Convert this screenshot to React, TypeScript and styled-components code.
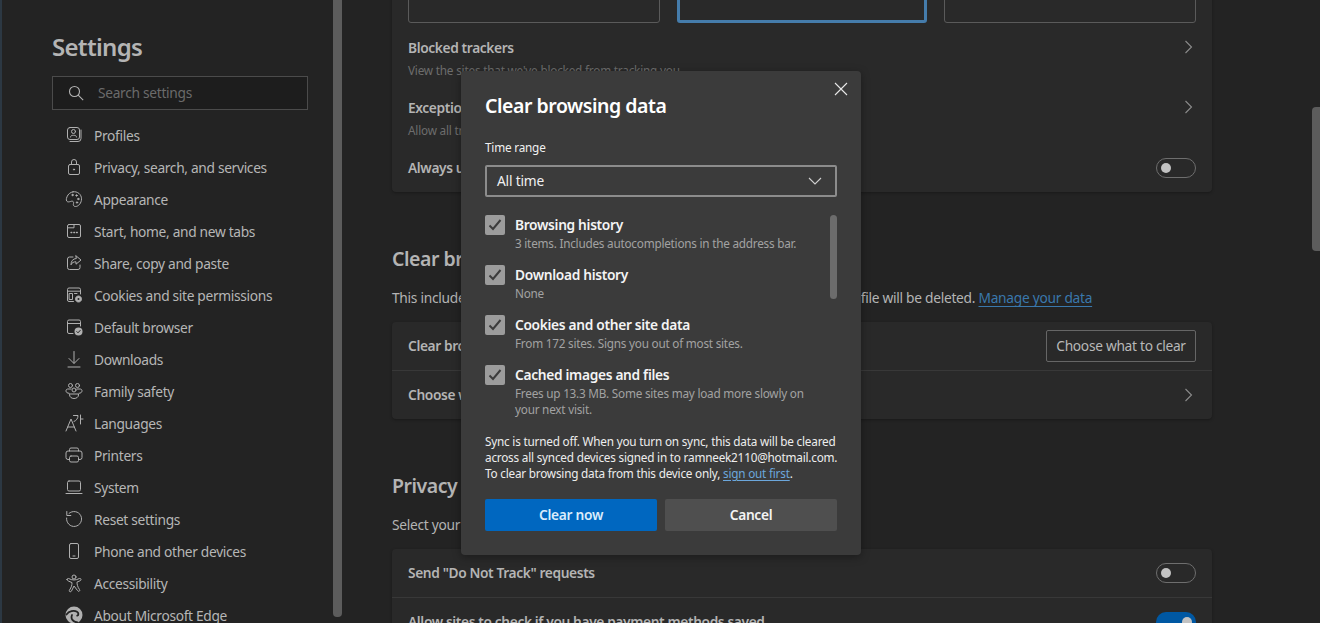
import { ReactNode } from 'react';
import styled, { createGlobalStyle } from 'styled-components';

const GlobalStyle = createGlobalStyle`
  html, body {
    margin: 0;
    height: 100%;
    overflow: hidden;
    background: #232323;
    font-family: 'Noto Sans', 'Open Sans', sans-serif;
    font-size: 14px;
  }
`;

const Page = styled.div`
  position: relative;
  display: flex;
  width: 1320px;
  height: 623px;
  overflow: hidden;
  border-left: 2px solid #2c3843;
  box-sizing: border-box;
  background: #232323;
`;

const Sidebar = styled.aside`
  width: 340px;
  flex: none;
  display: flex;
  height: 623px;
  overflow: hidden;
`;

const SideInner = styled.div`
  width: 256px;
  margin-left: 50px;
  padding-top: 30px;
`;

const SideTitle = styled.h1`
  margin: 0 0 12px;
  font-size: 24px;
  line-height: 34px;
  font-weight: 600;
  color: #b4b4b4;
  letter-spacing: -0.7px;
`;

const SearchBox = styled.div`
  height: 34px;
  box-sizing: border-box;
  border: 1px solid #4b4b4b;
  background: #1d1d1d;
  display: flex;
  align-items: center;
  padding: 0 0 1px 15px;
  gap: 14px;
  color: #6b6b6b;
  font-size: 13.75px;
  letter-spacing: -0.3px;
  svg { color: #b4b4b4; }
`;

const NavList = styled.nav`
  margin-top: 9px;
`;

const NavItem = styled.div`
  height: 32px;
  display: flex;
  align-items: center;
  color: #b6b6b6;
  font-size: 13.75px;
  letter-spacing: -0.32px;
  white-space: nowrap;
  padding-left: 12px;
  gap: 10px;
  svg { flex: none; }
`;

const SideScroll = styled.div`
  width: 9px;
  height: 617px;
  margin-left: 25px;
  background: #5c5c5c;
  border-radius: 0 0 4px 4px;
  flex: none;
`;

const Main = styled.main`
  flex: 1;
  height: 623px;
  overflow: hidden;
  padding-left: 50px;
`;

const Content = styled.div`
  width: 820px;
  margin-top: -77px;
`;

const Card = styled.section`
  background: #292929;
  border-radius: 4px;
  box-shadow: 0 1px 3px rgba(0, 0, 0, 0.3);
`;

const ThemeRow = styled.div`
  display: grid;
  grid-template-columns: 252px 250px 252px;
  column-gap: 17px;
  padding: 0 16px;
`;

const ThemeBox = styled.div<{ $active?: boolean }>`
  height: 100px;
  box-sizing: border-box;
  border-radius: 3px;
  border: ${(p) => (p.$active ? '3px solid #457cab' : '1px solid #5a5a5a')};
`;

const Row = styled.div<{ $h: number; $line?: boolean }>`
  height: ${(p) => p.$h}px;
  box-sizing: border-box;
  padding: 0 16px;
  display: flex;
  align-items: center;
  justify-content: space-between;
  border-top: ${(p) => (p.$line ? '1px solid #383838' : 'none')};
`;

const TallRow = styled(Row)`
  align-items: flex-start;
  padding-top: 15px;
  svg { margin-top: 1px; }
`;

const RowText = styled.div`
  display: flex;
  flex-direction: column;
  gap: 3px;
`;

const RowTitle = styled.div`
  font-size: 13.75px;
  line-height: 20px;
  font-weight: 600;
  color: #b4b4b4;
  letter-spacing: -0.38px;
  white-space: nowrap;
`;

const RowSub = styled.div`
  font-size: 11.75px;
  line-height: 18px;
  color: #6d6d6d;
  letter-spacing: -0.2px;
  white-space: nowrap;
`;

const Toggle = styled.div<{ $on?: boolean }>`
  width: 40px;
  height: 20px;
  flex: none;
  box-sizing: border-box;
  border-radius: 10px;
  border: ${(p) => (p.$on ? 'none' : '1px solid #6e6e6e')};
  background: ${(p) => (p.$on ? '#0058a3' : 'transparent')};
  display: flex;
  align-items: center;
  justify-content: ${(p) => (p.$on ? 'flex-end' : 'flex-start')};
  padding: 0 4px;
  &::after {
    content: '';
    width: 10px;
    height: 10px;
    border-radius: 50%;
    background: #c2c2c2;
  }
`;

const Heading = styled.h2<{ $top: number }>`
  margin: ${(p) => p.$top}px 0 0;
  font-size: 19.5px;
  line-height: 28px;
  font-weight: 600;
  color: #b4b4b4;
  letter-spacing: -0.46px;
  white-space: nowrap;
`;

const Intro = styled.p`
  margin: 15px 0 14px;
  font-size: 13.75px;
  line-height: 20px;
  color: #b4b4b4;
  letter-spacing: -0.28px;
  white-space: nowrap;
`;

const PageLink = styled.a`
  color: #3a78ac;
  text-decoration: underline;
  text-underline-offset: 3px;
`;

const OutlineButton = styled.div`
  width: 150px;
  height: 32px;
  box-sizing: border-box;
  border: 1px solid #666;
  border-radius: 2px;
  color: #b8b8b8;
  display: flex;
  align-items: center;
  justify-content: center;
  padding-bottom: 1px;
  font-size: 13.75px;
  letter-spacing: -0.3px;
`;

const Modal = styled.div`
  position: absolute;
  left: 459px;
  top: 71px;
  width: 400px;
  height: 484px;
  box-sizing: border-box;
  padding: 20px 24px 0;
  background: #3b3b3b;
  border-radius: 4px;
  box-shadow: 0 2px 8px rgba(0, 0, 0, 0.35);
  color: #fff;
`;

const CloseButton = styled.button`
  position: absolute;
  right: 13px;
  top: 11px;
  width: 14px;
  height: 14px;
  padding: 0;
  border: none;
  background: none;
  color: #e8e8e8;
  display: flex;
`;

const ModalTitle = styled.h3`
  margin: 0;
  font-size: 19.5px;
  line-height: 30px;
  font-weight: 600;
  letter-spacing: -0.46px;
  color: #fff;
`;

const FieldLabel = styled.div`
  margin-top: 17px;
  font-size: 11.75px;
  line-height: 18px;
  color: #f0f0f0;
  letter-spacing: -0.2px;
`;

const Select = styled.div`
  margin-top: 9px;
  height: 32px;
  box-sizing: border-box;
  border: 2px solid #8c8c8c;
  border-radius: 2px;
  padding: 0 13px 1px 10px;
  display: flex;
  align-items: center;
  justify-content: space-between;
  font-size: 13.75px;
  color: #f0f0f0;
  letter-spacing: -0.2px;
`;

const ListArea = styled.div`
  position: relative;
  margin-top: 18px;
  height: 202px;
  overflow: hidden;
`;

const CheckRow = styled.div`
  display: flex;
  gap: 10px;
  height: 50px;
`;

const CheckBox = styled.div`
  width: 20px;
  height: 20px;
  flex: none;
  background: #9c9c9c;
  border-radius: 2px;
  display: flex;
  align-items: center;
  justify-content: center;
  color: #3c3c3c;
`;

const CheckText = styled.div`
  width: 296px;
`;

const CheckTitle = styled.div`
  font-size: 13.75px;
  line-height: 20px;
  font-weight: 600;
  letter-spacing: -0.32px;
  color: #f4f4f4;
`;

const CheckSub = styled.div`
  font-size: 11.75px;
  line-height: 16px;
  color: #a2a2a2;
  letter-spacing: -0.23px;
`;

const ListThumb = styled.div`
  position: absolute;
  right: 0;
  top: 0;
  width: 7px;
  height: 84px;
  border-radius: 4px;
  background: #6c6c6c;
`;

const SyncNote = styled.p`
  margin: 16px 0 0;
  font-size: 11.75px;
  line-height: 16px;
  letter-spacing: -0.21px;
  color: #ededed;
  white-space: nowrap;
`;

const NoteLink = styled.a`
  color: #6ca7dc;
  text-decoration: underline;
  text-underline-offset: 2px;
`;

const Buttons = styled.div`
  display: grid;
  grid-template-columns: 172px 172px;
  justify-content: space-between;
  margin-top: 18px;
`;

const ActionButton = styled.button<{ $primary?: boolean }>`
  height: 32px;
  border: none;
  border-radius: 2px;
  padding: 0 0 2px;
  font-family: inherit;
  font-size: 13.75px;
  font-weight: 600;
  letter-spacing: -0.3px;
  background: ${(p) => (p.$primary ? '#0067c0' : '#4f4f4f')};
  color: ${(p) => (p.$primary ? '#d9ecfb' : '#f4f4f4')};
`;

const MainScroll = styled.div`
  position: absolute;
  right: 0;
  top: 107px;
  width: 8px;
  height: 144px;
  border-radius: 4px 0 0 4px;
  background: #5c5c5c;
`;

function Ico({ children }: { children: ReactNode }) {
  return (
    <svg
      width="20"
      height="20"
      viewBox="0 0 20 20"
      fill="none"
      stroke="#b0b0b0"
      strokeWidth="1"
      strokeLinecap="round"
      strokeLinejoin="round"
    >
      {children}
    </svg>
  );
}

const Chevron = () => (
  <svg width="16" height="16" viewBox="0 0 16 16" fill="none" stroke="#8b8b8b" strokeWidth="1.1">
    <path d="M5.5 2 11.5 8 5.5 14" />
  </svg>
);

const navItems: { label: string; icon: ReactNode }[] = [
  {
    label: 'Profiles',
    icon: (
      <Ico>
        <rect x="3.5" y="2.5" width="12" height="12" rx="2.5" />
        <path d="M17 5v8.5a3 3 0 0 1-3 3H6" />
        <circle cx="9.5" cy="6.5" r="2" />
        <path d="M6.5 12c0-1.2 1-1.7 3-1.7s3 .5 3 1.7" />
      </Ico>
    ),
  },
  {
    label: 'Privacy, search, and services',
    icon: (
      <Ico>
        <rect x="4.5" y="7.5" width="11" height="10" rx="1.5" />
        <path d="M7.5 7.5V5a2.5 2.5 0 0 1 5 0v2.5" />
        <circle cx="10" cy="12.5" r=".6" fill="#b0b0b0" />
      </Ico>
    ),
  },
  {
    label: 'Appearance',
    icon: (
      <Ico>
        <path d="M9 2.8c4.5-.8 8.5 2.6 8.5 7 0 4.3-3 7.7-6 7.7-2 0-2.5-1.5-2-3 .4-1.3-.2-2.5-1.8-2.3-1.5.2-2.5 1-4 .6C2 12.2 2 10 3 7.8 4 5.2 6.3 3.2 9 2.8Z" />
        <circle cx="8.5" cy="6" r=".7" fill="#b0b0b0" />
        <circle cx="12.5" cy="6.5" r=".7" fill="#b0b0b0" />
        <circle cx="14.3" cy="10" r=".7" fill="#b0b0b0" />
        <circle cx="13" cy="13.5" r=".7" fill="#b0b0b0" />
      </Ico>
    ),
  },
  {
    label: 'Start, home, and new tabs',
    icon: (
      <Ico>
        <rect x="3.5" y="3.5" width="13" height="13" rx="1.5" />
        <path d="M3.5 6.8H10V3.5" />
        <path d="M7 11.5h.8M9.8 11.5h.8M12.5 11.5h.8" strokeWidth="1.3" />
      </Ico>
    ),
  },
  {
    label: 'Share, copy and paste',
    icon: (
      <Ico>
        <path d="M9 4H5.5a2 2 0 0 0-2 2v8.5a2 2 0 0 0 2 2H14a2 2 0 0 0 2-2V12" />
        <path d="M12 2.8 17 7l-5 4.2V8.8c-2.5 0-4 .8-5 3 0-3.8 1.8-6 5-6.3Z" />
      </Ico>
    ),
  },
  {
    label: 'Cookies and site permissions',
    icon: (
      <Ico>
        <path d="M9.5 16.5H5a1.5 1.5 0 0 1-1.5-1.5V4.500A1.5 1.5 0 0 1 5 3h10a1.5 1.5 0 0 1 1.5 1.5V9" />
        <path d="M3.5 6.2h13" />
        <rect x="5.5" y="8.5" width="3" height="6" />
        <path d="M10.5 8.5h2.5" />
        <circle cx="14.5" cy="14" r="3" fill="#b0b0b0" stroke="#b0b0b0" strokeDasharray="1.2 .8" />
        <circle cx="14.5" cy="14" r="1" fill="#232323" stroke="none" />
      </Ico>
    ),
  },
  {
    label: 'Default browser',
    icon: (
      <Ico>
        <path d="M9 16.5H5a1.5 1.5 0 0 1-1.5-1.5V4.500A1.5 1.5 0 0 1 5 3h10a1.5 1.5 0 0 1 1.5 1.5V9" />
        <path d="M3.5 6.5h13" />
        <circle cx="14.5" cy="14.5" r="4" fill="#b0b0b0" stroke="none" />
        <path d="m12.8 14.6 1.2 1.2 2.2-2.4" stroke="#232323" />
      </Ico>
    ),
  },
  {
    label: 'Downloads',
    icon: (
      <Ico>
        <path d="M10 2.5v11.5M5 9.5l5 5 5-5M4 18h12" />
      </Ico>
    ),
  },
  {
    label: 'Family safety',
    icon: (
      <Ico>
        <circle cx="6.5" cy="4.5" r="2" />
        <circle cx="13.5" cy="4.5" r="2" />
        <circle cx="10" cy="9" r="2" />
        <path d="M7 8H3.8C2.8 8 2 8.8 2 9.8c0 1.5 1.2 2.5 3 2.5M13 8h3.2c1 0 1.8.8 1.8 1.8 0 1.5-1.2 2.5-3 2.5" />
        <path d="M5.5 13h9v1c0 2-2 3.5-4.5 3.5S5.5 16 5.5 14Z" />
      </Ico>
    ),
  },
  {
    label: 'Languages',
    icon: (
      <Ico>
        <path d="M2 18 7 6l5 12M3.8 14h6.4" />
        <path d="M9.5 2.5H14c0 3-1.5 5-4 6M16.5 2v9M16.5 6H19" />
      </Ico>
    ),
  },
  {
    label: 'Printers',
    icon: (
      <Ico>
        <path d="M5.5 6V4.5A1.5 1.5 0 0 1 7 3h6a1.5 1.5 0 0 1 1.5 1.5V6" />
        <path d="M5.5 14.5H4a2 2 0 0 1-2-2V8a2 2 0 0 1 2-2h12a2 2 0 0 1 2 2v4.5a2 2 0 0 1-2 2h-1.5" />
        <rect x="5.5" y="11" width="9" height="6" rx="1.5" />
      </Ico>
    ),
  },
  {
    label: 'System',
    icon: (
      <Ico>
        <rect x="3.5" y="4" width="13" height="10" rx="1.5" />
        <path d="M2 16.5h16" />
      </Ico>
    ),
  },
  {
    label: 'Reset settings',
    icon: (
      <Ico>
        <path d="M5 4.400A7.5 7.5 0 1 1 2.600 9" />
        <path d="M2.800 2.500v4h4" />
      </Ico>
    ),
  },
  {
    label: 'Phone and other devices',
    icon: (
      <Ico>
        <rect x="5.5" y="2.5" width="9" height="15" rx="1.5" />
        <path d="M9 15h2" />
      </Ico>
    ),
  },
  {
    label: 'Accessibility',
    icon: (
      <Ico>
        <circle cx="10" cy="4" r="2" />
        <path d="M3 6.5c0-1 1-1.300 1.800-.9C6.500 6.400 8 7 10 7s3.500-.6 5.200-1.400c.8-.4 1.800-.1 1.800.9 0 .6-.4 1-1 1.300l-3 1.300c0 2.500.5 4.500 2.500 7.500.5.800.2 1.500-.6 1.700-.6.100-1-.2-1.400-.8L10 13l-2.500 5c-.4.600-.8.900-1.400.8-.8-.2-1.100-.9-.6-1.700 2-3 2.500-5 2.500-7.500L5 8.300c-.6-.3-2-.7-2-1.800Z" />
      </Ico>
    ),
  },
  {
    label: 'About Microsoft Edge',
    icon: (
      <Ico>
        <circle cx="10" cy="10" r="8.5" fill="#b0b0b0" stroke="none" />
        <path d="M2.5 9.5C5 6 10 5 13 6.800c1.800 1.100 1.800 3.400.2 3.900" stroke="#232323" strokeWidth="1.8" />
        <path d="M8 10c-1.5 3.500.8 7 5.500 7.500" stroke="#232323" strokeWidth="1.8" />
      </Ico>
    ),
  },
];

const checks = [
  { title: 'Browsing history', sub: '3 items. Includes autocompletions in the address bar.' },
  { title: 'Download history', sub: 'None' },
  { title: 'Cookies and other site data', sub: 'From 172 sites. Signs you out of most sites.' },
  { title: 'Cached images and files', sub: 'Frees up 13.3 MB. Some sites may load more slowly on your next visit.' },
];

function App() {
  return (
    <Page>
      <GlobalStyle />
      <Sidebar>
        <SideInner>
          <SideTitle>Settings</SideTitle>
          <SearchBox>
            <svg width="16" height="16" viewBox="0 0 16 16" fill="none" stroke="currentColor" strokeWidth="1.1">
              <circle cx="6.5" cy="6.5" r="5" />
              <path d="m10.2 10.2 5 5" />
            </svg>
            Search settings
          </SearchBox>
          <NavList>
            {navItems.map((item) => (
              <NavItem key={item.label}>
                {item.icon}
                {item.label}
              </NavItem>
            ))}
          </NavList>
        </SideInner>
        <SideScroll />
      </Sidebar>

      <Main>
        <Content>
          <Card>
            <ThemeRow>
              <ThemeBox />
              <ThemeBox $active />
              <ThemeBox />
            </ThemeRow>
            <TallRow $h={60}>
              <RowText>
                <RowTitle>Blocked trackers</RowTitle>
                <RowSub>View the sites that we've blocked from tracking you</RowSub>
              </RowText>
              <Chevron />
            </TallRow>
            <TallRow $h={60}>
              <RowText>
                <RowTitle>Exceptions</RowTitle>
                <RowSub>Allow all trackers on sites you choose</RowSub>
              </RowText>
              <Chevron />
            </TallRow>
            <Row $h={49}>
              <RowTitle>Always use "Strict" tracking prevention</RowTitle>
              <Toggle />
            </Row>
          </Card>

          <Heading $top={53}>Clear browsing data</Heading>
          <Intro>
            This includes history, passwords, cookies, and more. Only data from this profile will be deleted.{' '}
            <PageLink>Manage your data</PageLink>
          </Intro>
          <Card>
            <Row $h={48}>
              <RowTitle>Clear browsing data now</RowTitle>
              <OutlineButton>Choose what to clear</OutlineButton>
            </Row>
            <Row $h={49} $line>
              <RowTitle>Choose what to clear every time you close the browser</RowTitle>
              <Chevron />
            </Row>
          </Card>

          <Heading $top={53}>Privacy</Heading>
          <Intro>Select your privacy settings for Microsoft Edge.</Intro>
          <Card>
            <Row $h={48}>
              <RowTitle>Send "Do Not Track" requests</RowTitle>
              <Toggle />
            </Row>
            <Row $h={49} $line>
              <RowTitle>Allow sites to check if you have payment methods saved</RowTitle>
              <Toggle $on />
            </Row>
          </Card>
        </Content>
      </Main>

      <MainScroll />

      <Modal>
        <CloseButton>
          <svg width="14" height="14" viewBox="0 0 14 14" stroke="currentColor" strokeWidth="1.1">
            <path d="m1 1 12 12M13 1 1 13" />
          </svg>
        </CloseButton>
        <ModalTitle>Clear browsing data</ModalTitle>
        <FieldLabel>Time range</FieldLabel>
        <Select>
          All time
          <svg width="14" height="8" viewBox="0 0 14 8" fill="none" stroke="#d0d0d0" strokeWidth="1.1">
            <path d="m1 1 6 6 6-6" />
          </svg>
        </Select>
        <ListArea>
          {checks.map((c) => (
            <CheckRow key={c.title}>
              <CheckBox>
                <svg width="14" height="14" viewBox="0 0 14 14" fill="none" stroke="currentColor" strokeWidth="2">
                  <path d="M1.5 7.5 5 11l7.5-9" />
                </svg>
              </CheckBox>
              <CheckText>
                <CheckTitle>{c.title}</CheckTitle>
                <CheckSub>{c.sub}</CheckSub>
              </CheckText>
            </CheckRow>
          ))}
          <ListThumb />
        </ListArea>
        <SyncNote>
          Sync is turned off. When you turn on sync, this data will be cleared
          <br />
          across all synced devices signed in to ramneek2110@hotmail.com.
          <br />
          To clear browsing data from this device only, <NoteLink>sign out first</NoteLink>.
        </SyncNote>
        <Buttons>
          <ActionButton $primary>Clear now</ActionButton>
          <ActionButton>Cancel</ActionButton>
        </Buttons>
      </Modal>
    </Page>
  );
}

export default App;
